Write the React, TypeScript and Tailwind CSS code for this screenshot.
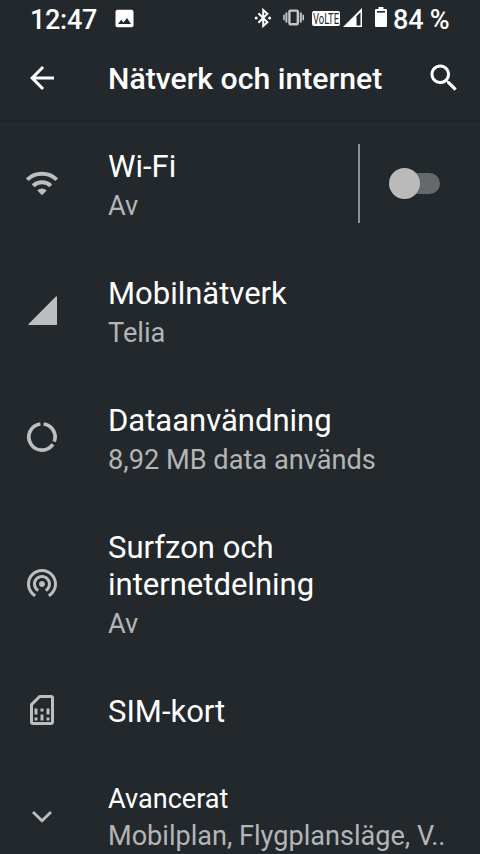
import React from "react";

interface SettingRowProps {
  icon: React.ReactNode;
  title: string;
  summary?: string;
  children?: React.ReactNode;
}

const WifiIcon = () => (
  <svg className="size-9" viewBox="0 0 36 36" fill="none" aria-hidden="true">
    <path
      d="M3.2 13.6A21.4 21.4 0 0 1 32.8 13.6M9.1 19.8A12.9 12.9 0 0 1 26.9 19.8"
      stroke="currentColor"
      strokeWidth="4"
    />
    <path d="M18 29.2L13.3 24.4A6.6 6.6 0 0 1 22.7 24.4Z" fill="currentColor" />
  </svg>
);

const SignalIcon = () => (
  <svg className="size-9" viewBox="0 0 36 36" fill="currentColor" aria-hidden="true">
    <path d="M5 32H32.2Q33 32 33 31.2V4Q33 2.6 31.9 3.6L4.6 30.9Q3.9 32 5 32Z" />
  </svg>
);

const DataUsageIcon = () => (
  <svg className="size-9" viewBox="0 1 36 36" fill="none" aria-hidden="true">
    <path
      d="M19.6 5A13.1 13.1 0 0 1 30.2 22.7M28.9 25.2A13.1 13.1 0 1 1 16.4 5"
      stroke="currentColor"
      strokeWidth="3.7"
    />
  </svg>
);

const HotspotIcon = () => (
  <svg className="size-9" viewBox="0 1 24 24" fill="currentColor" aria-hidden="true">
    <path d="M12 11c-1.1 0-2 .9-2 2s.9 2 2 2 2-.9 2-2-.9-2-2-2zm6 2c0-3.31-2.69-6-6-6s-6 2.69-6 6c0 2.22 1.21 4.15 3 5.19l1-1.74c-1.19-.7-2-1.97-2-3.45 0-2.21 1.79-4 4-4s4 1.79 4 4c0 1.48-.81 2.75-2 3.45l1 1.74c1.79-1.04 3-2.97 3-5.19zM12 3C6.48 3 2 7.48 2 13c0 3.7 2.01 6.92 4.99 8.65l1-1.73C5.61 18.53 4 15.96 4 13c0-4.42 3.58-8 8-8s8 3.58 8 8c0 2.96-1.61 5.53-4 6.92l1 1.73c2.99-1.73 5-4.95 5-8.65 0-5.52-4.48-10-10-10z" />
  </svg>
);

const SimIcon = () => (
  <svg className="size-9" viewBox="0 1 36 36" fill="none" aria-hidden="true">
    <path
      d="M15.6 4.5H27Q28.5 4.5 28.5 6V30Q28.5 31.5 27 31.5H9Q7.5 31.5 7.5 30V12.6Z"
      stroke="currentColor"
      strokeWidth="3"
      strokeLinejoin="round"
    />
    <path
      d="M10.5 16.5h3v6h-3zM10.5 25.5h3v3h-3zM16.5 16.5h3v3h-3zM16.5 22.5h3v6h-3zM22.5 16.5h3v6h-3zM22.5 25.5h3v3h-3z"
      fill="currentColor"
    />
  </svg>
);

const ChevronIcon = () => (
  <svg className="size-9" viewBox="0 0 36 36" fill="none" aria-hidden="true">
    <path d="M9 14L18 22.8L27 14" stroke="currentColor" strokeWidth="2.8" />
  </svg>
);

const StatusBar = () => (
  <div className="flex h-9 items-start text-white">
    <span className="ml-[30px] mt-0.5 w-[85px] text-[27px] font-medium leading-9 tracking-[-0.3px]">
      12:47
    </span>
    {/* Screenshot notification */}
    <svg className="mt-[9px] h-[19px] w-[19px]" viewBox="0 0 19 19" aria-hidden="true">
      <rect x="0.5" y="0.7" width="18" height="17.6" rx="2" fill="currentColor" />
      <path d="M3 15L6.2 10.8L8.5 13.4L12 9L16 15Z" fill="#23282c" />
    </svg>

    <div className="ml-auto flex">
      {/* Bluetooth */}
      <svg className="mt-2 h-5 w-[18px]" viewBox="0 0 18 20" fill="none" aria-hidden="true">
        <path
          d="M4.4 5.2L13.4 14.2L9.2 18V2L13.4 5.8L4.4 14.8"
          stroke="currentColor"
          strokeWidth="2"
        />
        <circle cx="2.2" cy="10" r="1.5" fill="currentColor" />
        <circle cx="15.6" cy="10" r="1.5" fill="currentColor" />
      </svg>
      {/* Vibrate */}
      <svg className="ml-[11px] mt-2 h-5 w-[21px] text-[#c4c6c7]" viewBox="0 0 21 20" fill="none" aria-hidden="true">
        <rect x="6.4" y="2.6" width="8.4" height="13.6" rx="1" stroke="currentColor" strokeWidth="2.4" />
        <path d="M3.4 4.5V14.5M17.8 4.5V14.5" stroke="currentColor" strokeWidth="2" />
        <path d="M1 6.8V12.2M20.2 6.8V12.2" stroke="currentColor" strokeWidth="1.6" />
      </svg>
      {/* VoLTE badge */}
      <svg className="ml-2 mt-[11px] h-[15px] w-7 overflow-visible" viewBox="0 0 28 15" aria-hidden="true">
        <rect width="28" height="15" rx="2" fill="currentColor" />
        <text
          x="1"
          y="12.7"
          fontSize="14"
          fontFamily="Roboto, sans-serif"
          textLength="26"
          lengthAdjust="spacingAndGlyphs"
          fill="#23282c"
        >
          VoLTE
        </text>
      </svg>
      {/* Cell signal */}
      <svg className="ml-[3px] mt-2 h-[19px] w-[19px]" viewBox="0 0 19 19" aria-hidden="true">
        <path d="M0 19L19 0V19Z" fill="currentColor" />
        <path d="M13.5 8.2L17.5 4.2V17.5H13.5Z" fill="#23282c" />
      </svg>
      {/* Battery */}
      <svg className="ml-[13px] mt-[7px] h-5 w-3" viewBox="0 0 12 20" aria-hidden="true">
        <path d="M3.5 0H8.5V2H11Q12 2 12 3V19Q12 20 11 20H1Q0 20 0 19V3Q0 2 1 2H3.5Z" fill="currentColor" />
        <path d="M2 4H10V5.6H2Z" fill="#23282c" />
      </svg>
      <span className="ml-1.5 mt-0.5 w-[87px] text-[27px] font-medium leading-9 tracking-[-0.2px]">
        84 %
      </span>
    </div>
  </div>
);

const Header = () => (
  <header className="flex h-[85px] items-center border-b border-[#1e2326] pl-6 pr-[18px] text-white">
    <button type="button" aria-label="Tillbaka">
      <svg className="size-9" viewBox="0 0 24 24" fill="currentColor" aria-hidden="true">
        <path d="M20 11H7.83l5.59-5.59L12 4l-8 8 8 8 1.41-1.41L7.83 13H20v-2z" />
      </svg>
    </button>
    <h1 className="ml-12 flex-1 whitespace-nowrap pt-0.5 text-[30.2px] font-medium leading-9">
      Nätverk och internet
    </h1>
    <button type="button" aria-label="Sök">
      <svg className="size-9" viewBox="0 0 24 24" fill="currentColor" aria-hidden="true">
        <path d="M15.5 14h-.79l-.28-.27C15.41 12.59 16 11.11 16 9.5 16 5.91 13.09 3 9.5 3S3 5.91 3 9.5 5.91 16 9.5 16c1.61 0 3.09-.59 4.23-1.57l.27.28v.79l5 4.99L20.49 19l-4.99-5zm-6 0C7.01 14 5 11.99 5 9.5S7.01 5 9.5 5 14 7.01 14 9.5 11.99 14 9.5 14z" />
      </svg>
    </button>
  </header>
);

const SettingRow: React.FC<SettingRowProps> = ({ icon, title, summary, children }) => (
  <li className="flex items-center py-6 pl-6">
    <span className="w-[84px] shrink-0 pt-px text-[#bdbebf]">{icon}</span>
    <div className="w-[250px] pb-px pt-1">
      <p className="text-[31px] leading-[37px] text-white">{title}</p>
      {summary && (
        <p className="mt-[5px] whitespace-nowrap text-[27.2px] leading-8 text-[#b3b5b6]">
          {summary}
        </p>
      )}
    </div>
    {children}
  </li>
);

const App: React.FC = () => {
  return (
    <div className="h-[854px] w-[480px] overflow-hidden bg-[#23282c] font-['Roboto',sans-serif]">
      <StatusBar />
      <Header />

      <ul className="-mt-px">
        <SettingRow icon={<WifiIcon />} title="Wi-Fi" summary="Av">
          <div className="h-[79px] w-0.5 bg-[#909396]" />
          {/* Switch, off */}
          <button
            type="button"
            role="switch"
            aria-checked="false"
            aria-label="Wi-Fi"
            className="ml-[31px] flex h-[21px] w-[49px] items-center rounded-full bg-[#65696c]"
          >
            <span className="-ml-0.5 size-[31px] shrink-0 rounded-full bg-[#bababa] shadow-sm" />
          </button>
        </SettingRow>
        <SettingRow icon={<SignalIcon />} title="Mobilnätverk" summary="Telia" />
        <SettingRow icon={<DataUsageIcon />} title="Dataanvändning" summary="8,92 MB data används" />
        <SettingRow icon={<HotspotIcon />} title="Surfzon och internetdelning" summary="Av" />
        <SettingRow icon={<SimIcon />} title="SIM-kort" />

        {/* Collapsed advanced section, cut off by the screen edge */}
        <li className="flex items-center pl-6 pt-[26px]">
          <span className="w-[84px] shrink-0 pb-1 text-[#bdbebf]">
            <ChevronIcon />
          </span>
          <div className="whitespace-nowrap text-[27.1px] leading-[37px]">
            <p className="text-white">Avancerat</p>
            <p className="text-[#b3b5b6]">Mobilplan, Flygplansläge, V..</p>
          </div>
        </li>
      </ul>
    </div>
  );
};

export default App;
